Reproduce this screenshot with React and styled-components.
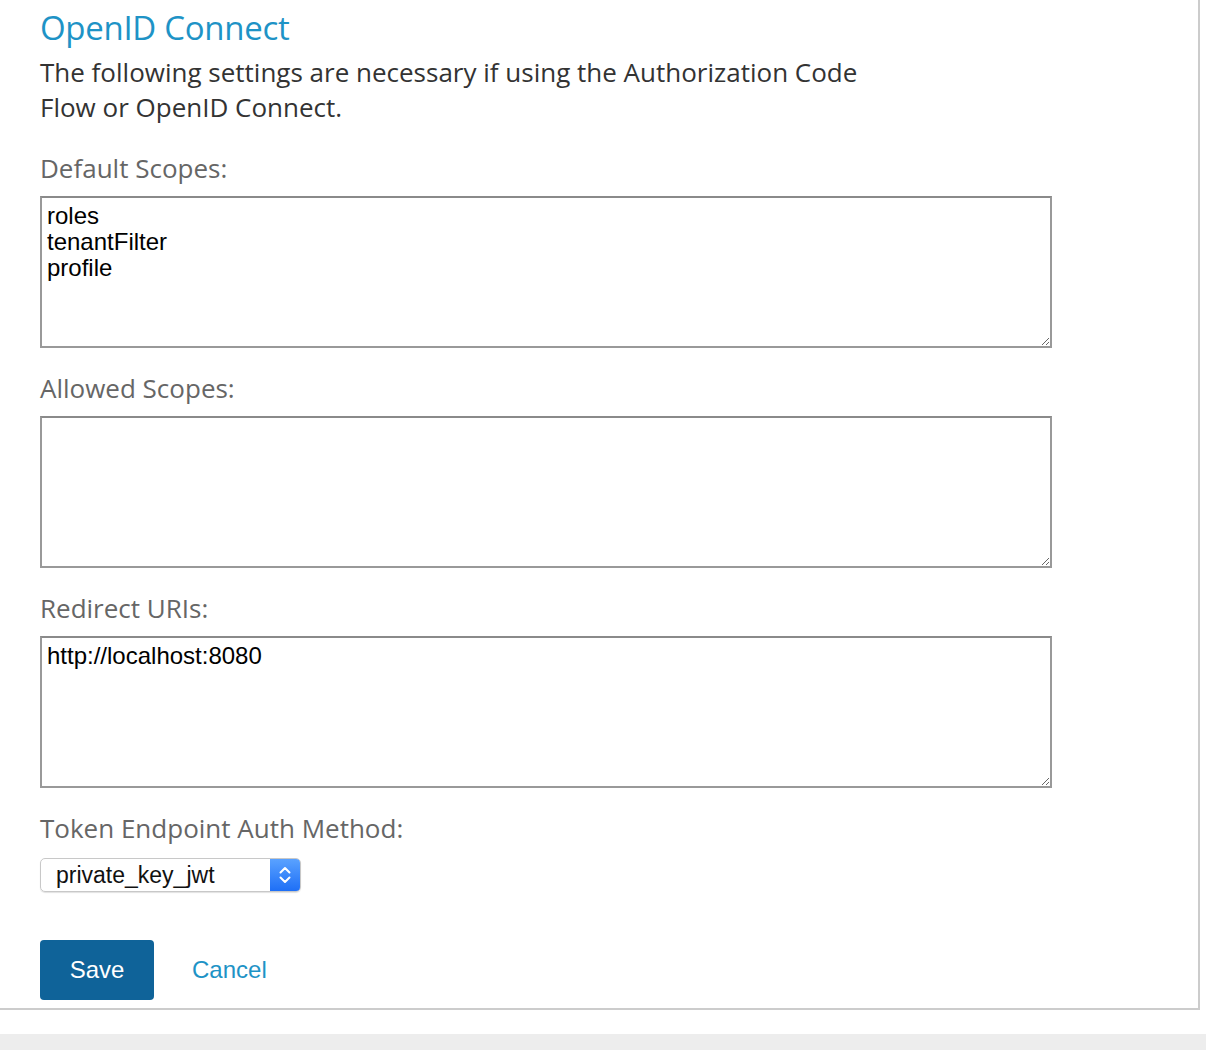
import styled, { createGlobalStyle } from 'styled-components';

const GlobalStyle = createGlobalStyle`
  html, body {
    margin: 0;
    padding: 0;
    background: #fff;
  }
  body {
    font-family: "Open Sans", "Noto Sans", sans-serif;
  }
`;

export default function App() {
  return (
    <>
      <GlobalStyle />
      <Page>
        <Panel>
          <Title>OpenID Connect</Title>
          <Intro>
            The following settings are necessary if using the Authorization Code
            <br />
            Flow or OpenID Connect.
          </Intro>

          <Field>
            <Label>Default Scopes:</Label>
            <Area defaultValue={'roles\ntenantFilter\nprofile'} />
          </Field>

          <Field>
            <Label>Allowed Scopes:</Label>
            <Area defaultValue="" />
          </Field>

          <Field>
            <Label>Redirect URIs:</Label>
            <Area defaultValue="http://localhost:8080" />
          </Field>

          <Field>
            <Label>Token Endpoint Auth Method:</Label>
            <Select>
              <SelectText>private_key_jwt</SelectText>
              <SelectArrows>
                <svg width="14" height="22" viewBox="0 0 14 22" fill="none">
                  <path d="M2.5 8.5L7 4l4.5 4.5" stroke="#fff" strokeWidth="2" strokeLinecap="round" strokeLinejoin="round" />
                  <path d="M2.5 13.5L7 18l4.5-4.5" stroke="#fff" strokeWidth="2" strokeLinecap="round" strokeLinejoin="round" />
                </svg>
              </SelectArrows>
            </Select>
          </Field>

          <Actions>
            <SaveButton>Save</SaveButton>
            <CancelLink>Cancel</CancelLink>
          </Actions>
        </Panel>
        <Footer />
      </Page>
    </>
  );
}

const Page = styled.div`
  width: 1206px;
  height: 1050px;
  display: flex;
  flex-direction: column;
  overflow: hidden;
`;

const Panel = styled.div`
  width: 1200px;
  height: 1010px;
  box-sizing: border-box;
  border-right: 2px solid #cccccc;
  border-bottom: 2px solid #cccccc;
  padding: 0 0 0 40px;
`;

const Title = styled.h1`
  margin: 0;
  padding-top: 6px;
  font-size: 33px;
  line-height: 44px;
  font-weight: 400;
  color: #1e93c6;
  letter-spacing: -0.3px;
`;

const Intro = styled.p`
  margin: 5px 0 25px;
  font-size: 26px;
  line-height: 35px;
  color: #333;
`;

const Field = styled.div`
  display: flex;
  flex-direction: column;
  margin-top: 22px;
`;

const Label = styled.div`
  font-size: 26px;
  line-height: 36px;
  color: #666;
  margin-bottom: 10px;
`;

const Area = styled.textarea`
  width: 1012px;
  height: 152px;
  box-sizing: border-box;
  border: 2px solid #999;
  border-top-color: #8a8a8a;
  border-radius: 0;
  padding: 5px 5px 3px;
  font-family: "Liberation Sans", Arial, sans-serif;
  font-size: 24px;
  line-height: 26px;
  color: #000;
  background: #fff;
  outline: none;
  margin: 0;
`;

const Select = styled.div`
  width: 261px;
  height: 34px;
  box-sizing: border-box;
  display: flex;
  align-items: stretch;
  border: 1px solid #c8c8c8;
  border-radius: 5px;
  box-shadow: 0 1px 1px rgba(0, 0, 0, 0.12);
  overflow: hidden;
  margin-top: 2px;
`;

const SelectText = styled.div`
  flex: 1;
  display: flex;
  align-items: center;
  padding-left: 15px;
  font-family: "Liberation Sans", Arial, sans-serif;
  font-size: 23px;
  color: #111;
`;

const SelectArrows = styled.div`
  width: 30px;
  display: flex;
  align-items: center;
  justify-content: center;
  background: linear-gradient(#5aa2ff, #1e6ff6);
`;

const Actions = styled.div`
  display: flex;
  align-items: center;
  gap: 38px;
  margin-top: 48px;
`;

const SaveButton = styled.button`
  width: 114px;
  height: 60px;
  border: none;
  border-radius: 4px;
  background: #0f6399;
  color: #fff;
  font-family: "Liberation Sans", Arial, sans-serif;
  font-size: 24px;
  cursor: pointer;
`;

const CancelLink = styled.a`
  font-family: "Liberation Sans", Arial, sans-serif;
  font-size: 24px;
  color: #1e93c6;
  cursor: pointer;
`;

const Footer = styled.div`
  margin-top: 24px;
  flex: 1;
  background: #ededed;
`;
